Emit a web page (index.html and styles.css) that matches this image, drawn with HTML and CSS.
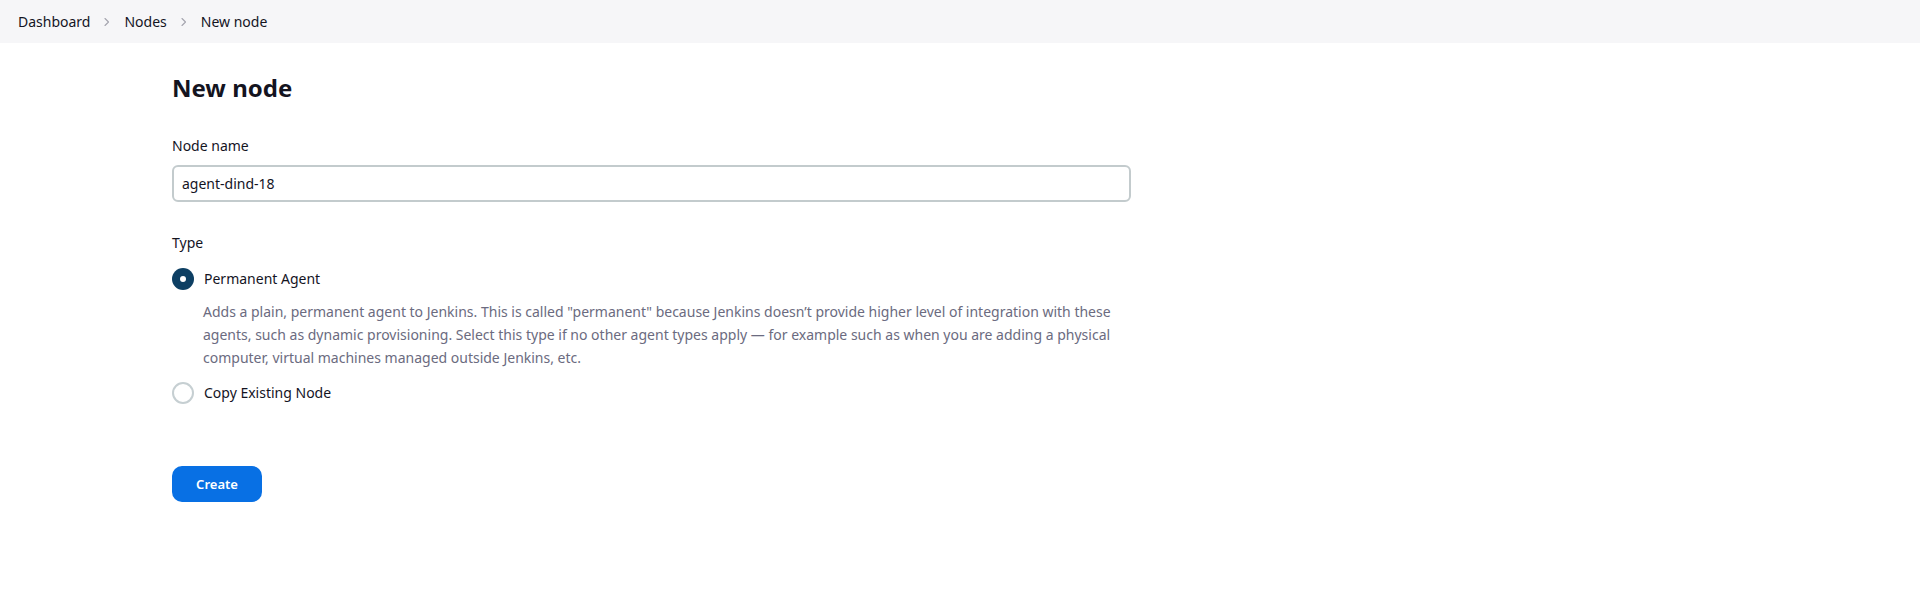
FILE: index.html
```html
<!DOCTYPE html>
<html lang="en">
<head>
<meta charset="utf-8">
<title>New node</title>
<link rel="stylesheet" href="styles.css">
</head>
<body>
<header class="breadcrumb-bar">
  <ol class="breadcrumbs">
    <li class="crumb"><a href="#">Dashboard</a></li>
    <li class="sep"><svg viewBox="0 0 10 10" width="10" height="10"><path d="M3 1.5 L6.5 5 L3 8.5" fill="none" stroke="currentColor" stroke-width="1.1" stroke-linecap="round" stroke-linejoin="round"/></svg></li>
    <li class="crumb"><a href="#">Nodes</a></li>
    <li class="sep"><svg viewBox="0 0 10 10" width="10" height="10"><path d="M3 1.5 L6.5 5 L3 8.5" fill="none" stroke="currentColor" stroke-width="1.1" stroke-linecap="round" stroke-linejoin="round"/></svg></li>
    <li class="crumb current">New node</li>
  </ol>
</header>
<main class="main">
  <form class="form">
    <h1 class="title">New node</h1>
    <label class="field-label" for="name">Node name</label>
    <input class="text-input" id="name" type="text" value="agent-dind-18">
    <div class="field-label type-label">Type</div>
    <div class="radio-row">
      <span class="radio checked"></span>
      <span class="radio-label">Permanent Agent</span>
    </div>
    <p class="desc">Adds a plain, permanent agent to Jenkins. This is called "permanent" because Jenkins doesn’t provide higher level of integration with these agents, such as dynamic provisioning. Select this type if no other agent types apply — for example such as when you are adding a physical computer, virtual machines managed outside Jenkins, etc.</p>
    <div class="radio-row copy-row">
      <span class="radio"></span>
      <span class="radio-label">Copy Existing Node</span>
    </div>
    <button class="btn-primary" type="button">Create</button>
  </form>
</main>
</body>
</html>
```
FILE: styles.css
```css
* { box-sizing: border-box; }
html, body {
  margin: 0;
  padding: 0;
  background: #ffffff;
  font-family: "Noto Sans", "Open Sans", sans-serif;
  color: #14141f;
  font-size: 14px;
}
.breadcrumb-bar {
  height: 43px;
  background: #f6f6f8;
  display: flex;
  align-items: center;
  padding-left: 18px;
}
.breadcrumbs {
  list-style: none;
  margin: 0;
  padding: 0;
  display: flex;
  align-items: center;
  font-size: 14px;
  line-height: 20px;
}
.crumb a {
  color: #14141f;
  text-decoration: none;
}
.sep {
  color: #a4a4ae;
  display: flex;
  align-items: center;
  padding: 0 12px;
}
.main {
  padding: 0 172px;
}
.form {
  width: 959px;
  display: flex;
  flex-direction: column;
  align-items: flex-start;
}
.title {
  margin: 30px 0 0 0;
  font-size: 24px;
  line-height: 29px;
  font-weight: 700;
}
.field-label {
  display: block;
  margin-top: 34px;
  font-size: 14px;
  line-height: 20px;
}
.text-input {
  margin-top: 9px;
  width: 959px;
  height: 37px;
  border: 2px solid #c3cbcd;
  border-radius: 6px;
  padding: 0 8px;
  font-family: inherit;
  font-size: 14px;
  color: #14141f;
  background: #fff;
  outline: none;
}
.type-label {
  margin-top: 31px;
}
.radio-row {
  display: flex;
  align-items: center;
  gap: 10px;
  margin-top: 14px;
  height: 24px;
}
.radio {
  width: 22px;
  height: 22px;
  border-radius: 50%;
  border: 2px solid #c6cfd2;
  background: #fff;
  display: inline-block;
  position: relative;
}
.radio.checked {
  border: none;
  background: #0d3f63;
}
.radio.checked::after {
  content: "";
  position: absolute;
  left: 8px;
  top: 8px;
  width: 6px;
  height: 6px;
  border-radius: 50%;
  background: #fff;
}
.radio-label {
  font-size: 14px;
  line-height: 20px;
}
.desc {
  margin: 9px 0 0 31px;
  max-width: 928px;
  font-size: 14px;
  line-height: 23px;
  color: #6b6b80;
}
.copy-row {
  margin-top: 12px;
}
.btn-primary {
  margin-top: 61px;
  width: 90px;
  height: 36px;
  border: none;
  border-radius: 10px;
  background: #0870e4;
  color: #fff;
  font-family: inherit;
  font-size: 13px;
  font-weight: 600;
  cursor: pointer;
}
```
